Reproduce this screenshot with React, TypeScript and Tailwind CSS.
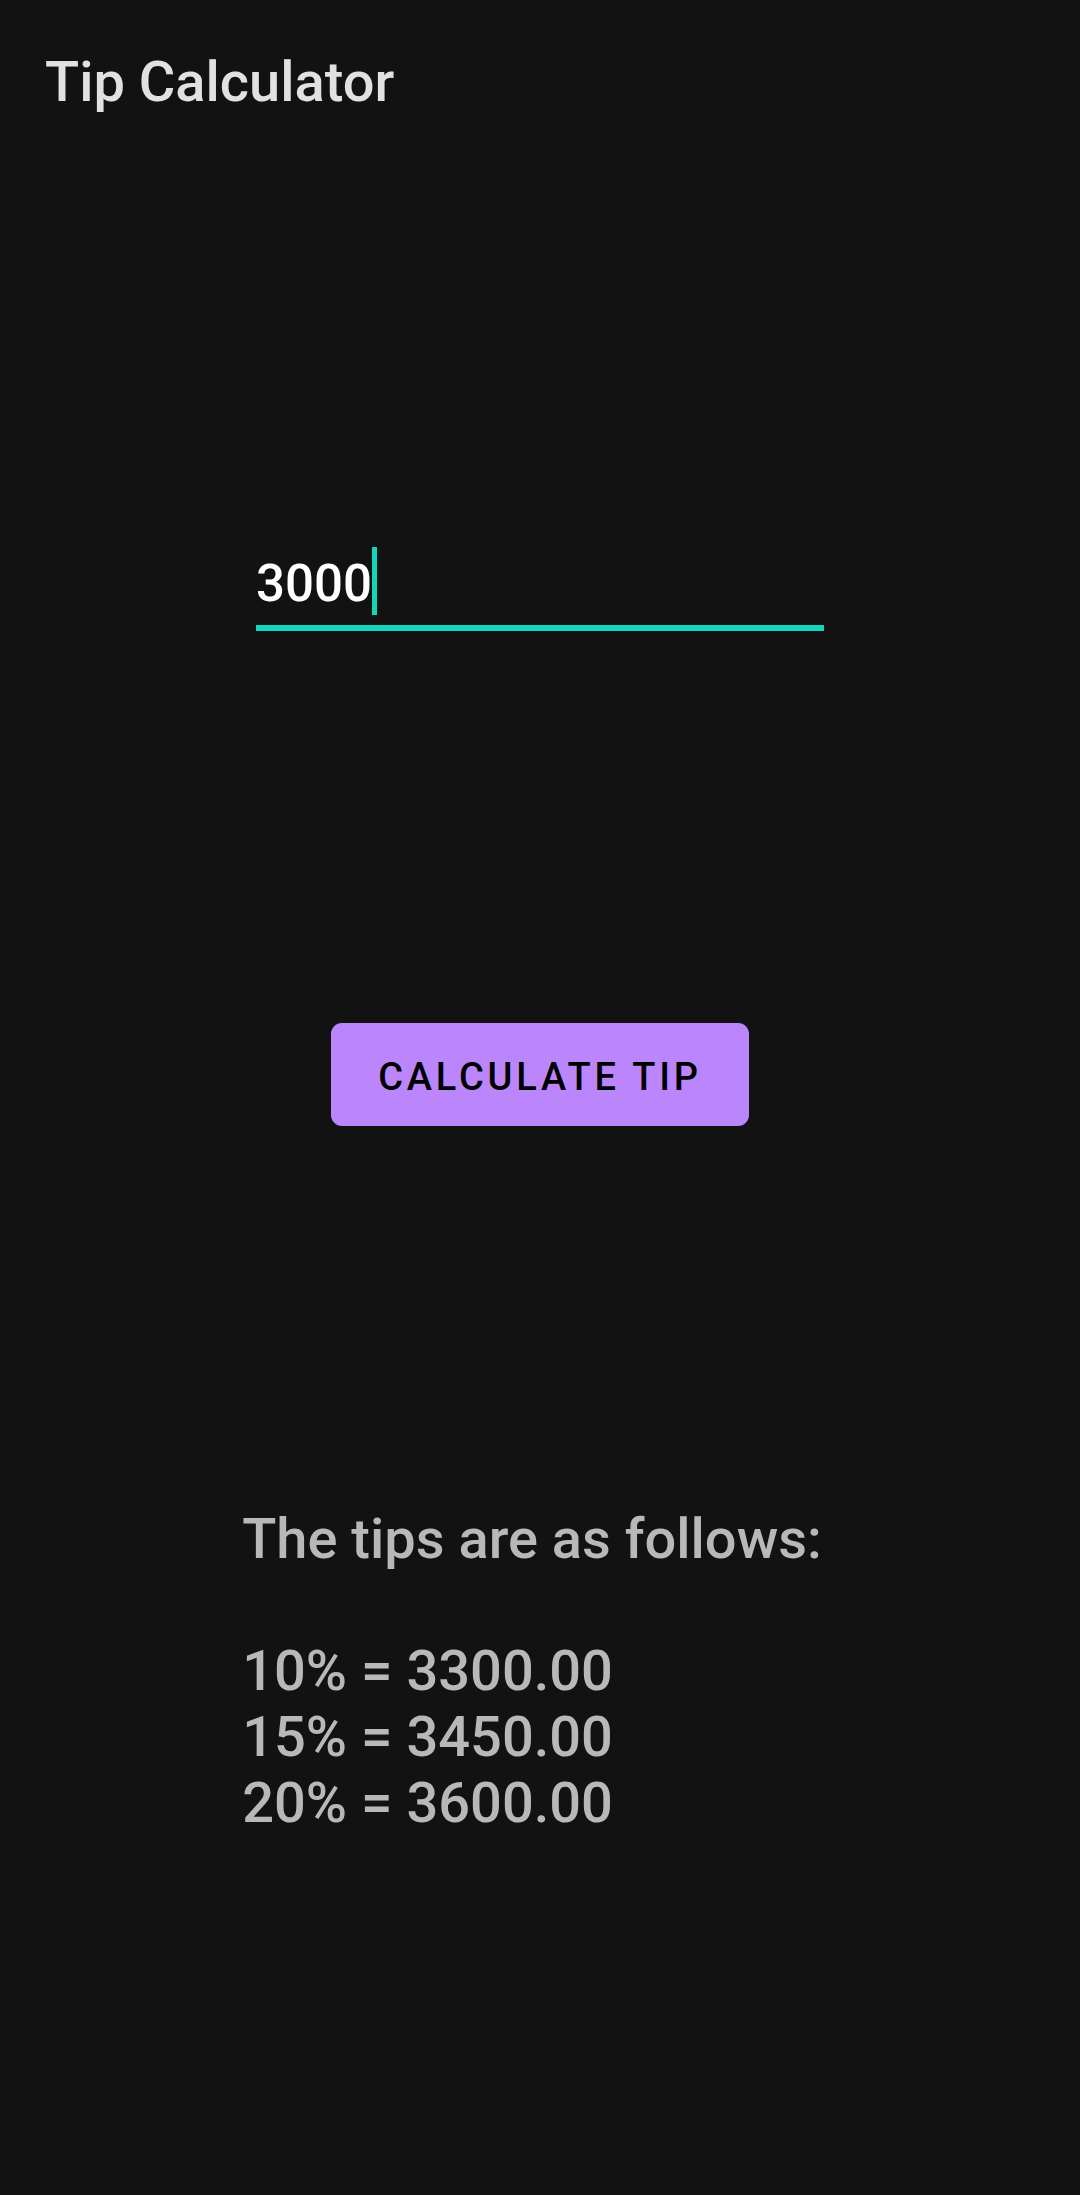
import { useEffect, useRef, useState } from "react";

export default function App() {
  const [amount, setAmount] = useState("3000");
  const [base, setBase] = useState(3000);
  const inputRef = useRef<HTMLInputElement>(null);
  useEffect(() => inputRef.current?.focus(), []);

  return (
    <div className="flex min-h-screen flex-col bg-[#121212] font-['Roboto',sans-serif] font-medium">
      <header className="px-[45px] pt-[48px]">
        <h1 className="text-[56px] leading-[68px] font-medium text-[#e1e1e1]">Tip Calculator</h1>
      </header>
      <main className="flex flex-col items-center pt-[431px]">
        <div className="relative w-[568px] border-b-[6px] border-[#14d5bc] pb-[10px]">
          <input
            aria-label="Amount"
            ref={inputRef}
            inputMode="decimal"
            value={amount}
            onChange={(e) => setAmount(e.target.value)}
            className="block h-[68px] w-full bg-transparent pt-[5px] text-[51px] leading-[62px] text-white caret-transparent outline-none"
          />
          <div aria-hidden="true" className="pointer-events-none absolute top-0 left-0 flex h-[68px] text-[51px]">
            <span className="invisible">{amount}</span>
            <span className="w-[5px] bg-[#14d5bc]" />
          </div>
        </div>
        <button
          type="button"
          onClick={() => setBase(Number(amount) || 0)}
          className="mt-[392px] h-[103px] rounded-[11px] bg-[#bb86fc] px-[47px] pt-[5px] text-[38px] tracking-widest text-black uppercase"
        >
          Calculate tip
        </button>
        <section className="mt-[380px] pr-[16px] text-[56px] leading-[66px] text-[#b8b8b8]">
          <p>The tips are as follows:</p>
          <ul className="pt-[66px]">
            {[10, 15, 20].map((p) => (
              <li key={p}>{`${p}% = ${((base * (100 + p)) / 100).toFixed(2)}`}</li>
            ))}
          </ul>
        </section>
      </main>
    </div>
  );
}
